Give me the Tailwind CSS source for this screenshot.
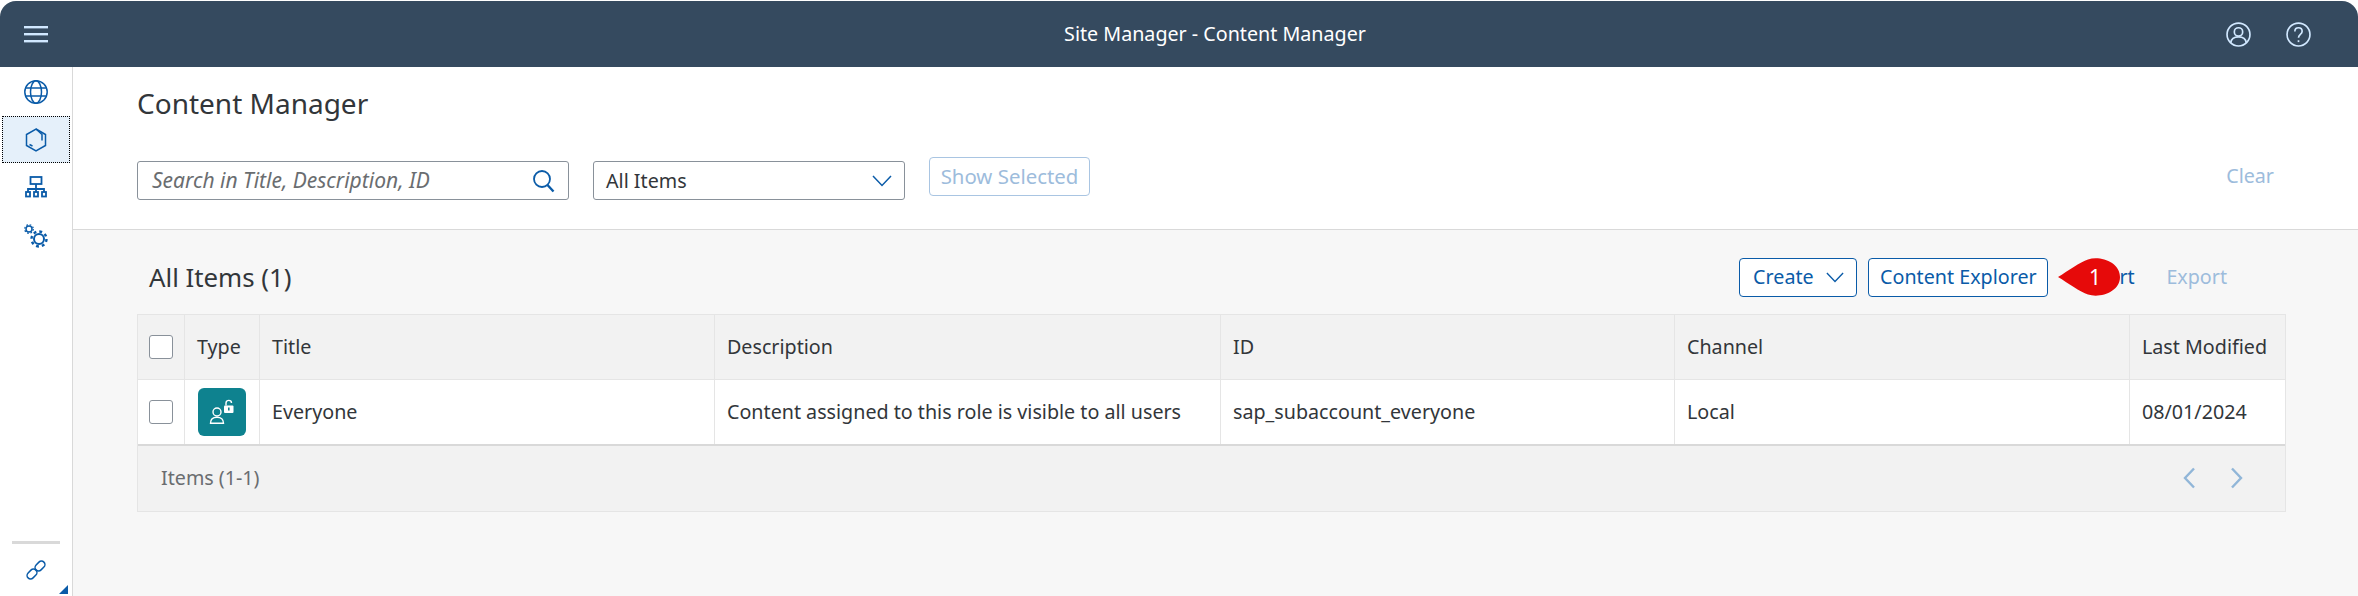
<!DOCTYPE html>
<html lang="en">
	<head>
		<meta charset="UTF-8" />
		<meta name="viewport" content="width=device-width, initial-scale=1.0" />
		<title>Content Manager</title>
		<script src="https://cdn.jsdelivr.net/npm/@tailwindcss/browser@4"></script>
	</head>
	<body class="bg-white">
		<div class="w-[2358px] h-[596px] pt-px overflow-hidden flex flex-col font-['Noto_Sans',sans-serif] text-[19.7px] text-[#32363a]">
			<!-- shell bar -->
			<header class="h-[66px] shrink-0 bg-[#354a5f] rounded-t-[16px] relative flex items-center justify-between pl-[24px] pr-[47px] text-white">
				<svg class="w-[24px] h-[17px]" viewBox="0 0 24 17" fill="#d1e8ff"><rect y="0" width="24" height="2.400" /><rect y="7" width="24" height="2.400" /><rect y="14" width="24" height="2.400" /></svg>
				<span class="absolute left-[708px] w-[1014px] text-center">Site Manager - Content Manager</span>
				<div class="flex gap-[35px] items-center">
					<svg class="w-[25px] h-[25px]" viewBox="0 0 24 24" fill="none" stroke="#d1e8ff" stroke-width="1.600"><circle cx="12" cy="12" r="11" /><circle cx="12" cy="9.500" r="4" /><path d="M4.500 20c.5-4 3.500-5.800 7.500-5.800s7 1.800 7.500 5.800" /></svg>
					<svg class="w-[25px] h-[25px]" viewBox="0 0 24 24" fill="none" stroke="#d1e8ff" stroke-width="1.600"><circle cx="12" cy="12" r="11" /><path d="M8.500 9c0-2.200 1.500-3.500 3.500-3.500s3.500 1.300 3.500 3.300c0 3-3.500 3-3.500 6.200" /><path d="M12 17.500v1.800" /></svg>
				</div>
			</header>

			<div class="flex flex-1 min-h-0">
				<!-- side nav -->
				<aside class="w-[73px] shrink-0 bg-white border-r border-[#d9d9d9] rounded-bl-[14px] relative flex flex-col">
					<div class="h-[49px] flex items-center justify-center">
						<svg class="w-[24px] h-[24px]" viewBox="0 0 24 24" fill="none" stroke="#0a5ba8" stroke-width="1.500"><circle cx="12" cy="12" r="11.200" /><ellipse cx="12" cy="12" rx="5.500" ry="11.200" /><path d="M1.500 8h21M1.500 16h21" /></svg>
					</div>
					<div class="h-[47px] bg-[#e5f0fa] border border-dotted border-black mx-[2px] flex items-center justify-center">
						<svg class="w-[22px] h-[24px]" viewBox="0 0 22 24" fill="none" stroke="#0a5ba8" stroke-width="1.500"><path d="M11 1l9.500 5.500v11L11 23l-9.500-5.500v-11z" /><path d="M11 1l6 5.500v6" /><path d="M4.500 16.500l3 1.500" /></svg>
					</div>
					<div class="h-[48px] flex items-center justify-center">
						<svg class="w-[22px] h-[22px]" viewBox="0 0 22 22" fill="none" stroke="#0a5ba8" stroke-width="1.800"><rect x="5.500" y="1" width="11" height="7" /><path d="M11 8v5M3 16v-3h16v3M11 13v3" /><rect x="1" y="16" width="4" height="4.500" /><rect x="9" y="16" width="4" height="4.500" /><rect x="17" y="16" width="4" height="4.500" /></svg>
					</div>
					<div class="h-[50px] flex items-center justify-center">
						<svg class="w-[24px] h-[24px]" viewBox="0 0 24 24" fill="none" stroke="#0a5ba8"><circle cx="5" cy="5" r="3" stroke-width="1.500" /><circle cx="5" cy="5" r="4.300" stroke-width="1.200" stroke-dasharray="1.700 1.700" /><circle cx="15" cy="15" r="5" stroke-width="2" /><circle cx="15" cy="15" r="7.500" stroke-width="2.400" stroke-dasharray="2.900 3" /></svg>
					</div>
					<div class="mt-auto mx-[12px] h-[3px] bg-[#d9d9d9]"></div>
					<div class="h-[52px] flex items-center justify-center">
						<svg class="w-[22px] h-[22px]" viewBox="0 0 22 22" fill="none" stroke="#0a5ba8" stroke-width="1.500">
							<rect x="-5.500" y="-3.500" width="11" height="7" rx="3.500" transform="translate(7 15) rotate(-45)" />
							<rect x="-5.500" y="-3.500" width="11" height="7" rx="3.500" transform="translate(15 7) rotate(-45)" />
						</svg>
					</div>
					<span class="absolute right-[4px] bottom-[2px] w-0 h-0 border-l-[9px] border-l-transparent border-b-[9px] border-b-[#0a5ba8]"></span>
				</aside>

				<main class="flex-1 min-w-0 bg-[#f7f7f7] flex flex-col">
					<!-- filter bar -->
					<section class="h-[163px] shrink-0 bg-white border-b border-[#d9d9d9] pl-[64px] pr-[84px] pt-[16px]">
						<h1 class="text-[28px] leading-[40px]">Content Manager</h1>
						<div class="mt-[34px] flex items-start">
							<div class="w-[432px] h-[39px] mt-[4px] border border-[#89919a] rounded-[3px] pl-[14px] pr-[12px] flex items-center justify-between bg-white">
								<span class="italic text-[21px] text-[#6a6d70]">Search in Title, Description, ID</span>
								<svg class="w-[24px] h-[24px]" viewBox="0 0 24 24" fill="none" stroke="#0a5ba8" stroke-width="1.800"><circle cx="10" cy="10" r="8" /><path d="M15.500 16l6 6.500" stroke-width="2.400" /></svg>
							</div>
							<div class="w-[312px] h-[39px] mt-[4px] ml-[24px] border border-[#89919a] rounded-[3px] pl-[12px] pr-[12px] flex items-center justify-between bg-white">
								<span>All Items</span>
								<svg class="w-[20px] h-[12px]" viewBox="0 0 20 12" fill="none" stroke="#0a5ba8" stroke-width="1.500"><path d="M1 1l9 9.500L19 1" /></svg>
							</div>
							<button class="w-[161px] h-[39px] ml-[24px] border border-[#a9c5e2] rounded-[4px] text-[20.400px] text-[#9dbcdc] text-center">Show Selected</button>
							<span class="ml-auto mt-[4px] leading-[30px] text-[#9dbcdc]">Clear</span>
						</div>
					</section>

					<div class="pl-[64px] pr-[72px]">
						<!-- toolbar -->
						<div class="h-[84px] pl-[12px] pt-[10px] flex items-center relative">
							<h2 class="text-[25.800px]">All Items (1)</h2>
							<button class="ml-auto w-[118px] h-[39px] border border-[#0a5ba8] rounded-[4px] bg-white text-[#0a5ba8] flex items-center justify-center gap-[12px]">Create
								<svg class="w-[18px] h-[11px]" viewBox="0 0 20 12" fill="none" stroke="#0a5ba8" stroke-width="1.500"><path d="M1 1l9 9.500L19 1" /></svg>
							</button>
							<button class="ml-[11px] w-[180px] h-[39px] border border-[#0a5ba8] rounded-[4px] bg-white text-[#0a5ba8]">Content Explorer</button>
							<span class="ml-[22px] w-[60px] text-[#0a5ba8]">Import</span>
							<span class="ml-[36px] mr-[59px] text-[#9dbcdc]">Export</span>
							<!-- callout marker -->
							<div class="absolute left-[1921px] top-[27px] w-[62px] h-[40px]">
								<svg class="w-[62px] h-[40px]" viewBox="0 0 62 40"><path d="M0 20C10 14 22 5 30 2.500 42-1.500 62 5 62 20S42 41.500 30 37.500C22 35 10 26 0 20z" fill="#e60a0a" /></svg>
								<span class="absolute left-[31px] top-[5px] text-[21px] leading-[30px] text-white">1</span>
							</div>
						</div>

						<!-- table -->
						<div class="border-t border-x border-[#e5e5e5]">
							<div class="grid grid-cols-[47px_75px_455px_506px_454px_455px_1fr] h-[65px] bg-[#f2f2f2] border-b border-[#e5e5e5]">
								<div class="border-r border-[#e5e5e5] flex items-center justify-center"><span class="w-[24px] h-[24px] bg-white border border-[#89919a] rounded-[3px]"></span></div>
								<div class="border-r border-[#e5e5e5] pl-[12px] flex items-center">Type</div>
								<div class="border-r border-[#e5e5e5] pl-[12px] flex items-center">Title</div>
								<div class="border-r border-[#e5e5e5] pl-[12px] flex items-center">Description</div>
								<div class="border-r border-[#e5e5e5] pl-[12px] flex items-center">ID</div>
								<div class="border-r border-[#e5e5e5] pl-[12px] flex items-center">Channel</div>
								<div class="pl-[12px] flex items-center">Last Modified</div>
							</div>
							<div class="grid grid-cols-[47px_75px_455px_506px_454px_455px_1fr] h-[66px] bg-white border-b-[2px] border-[#d9d9d9]">
								<div class="border-r border-[#e5e5e5] flex items-center justify-center"><span class="w-[24px] h-[24px] bg-white border border-[#89919a] rounded-[3px]"></span></div>
								<div class="border-r border-[#e5e5e5] flex items-center justify-center">
									<div class="w-[48px] h-[48px] rounded-[6px] bg-[#0e828f] flex items-center justify-center">
										<svg class="w-[26px] h-[26px]" viewBox="0 0 26 26" fill="none" stroke="#fff" stroke-width="1.400"><circle cx="8" cy="13" r="4" /><path d="M1.500 24.200c0-4 2.500-6 6.500-6s6.500 2 6.500 6z" /><rect x="15" y="6.500" width="9.500" height="7.500" rx="1" fill="#fff" stroke="none" /><path d="M17 6.500V4c0-3.500 5.500-3.500 5.500 0" /><rect x="19" y="8.500" width="1.600" height="3" fill="#0e828f" stroke="none" /></svg>
									</div>
								</div>
								<div class="border-r border-[#e5e5e5] pl-[12px] flex items-center">Everyone</div>
								<div class="border-r border-[#e5e5e5] pl-[12px] flex items-center">Content assigned to this role is visible to all users</div>
								<div class="border-r border-[#e5e5e5] pl-[12px] flex items-center">sap_subaccount_everyone</div>
								<div class="border-r border-[#e5e5e5] pl-[12px] flex items-center">Local</div>
								<div class="pl-[12px] flex items-center">08/01/2024</div>
							</div>
							<!-- pagination -->
							<div class="h-[66px] bg-[#f2f2f2] border-b border-[#e5e5e5] pl-[23px] pr-[42px] pb-[2px] flex items-center justify-between">
								<span class="text-[#6a6d70]">Items (1-1)</span>
								<div class="flex gap-[36px]">
									<svg class="w-[12px] h-[22px]" viewBox="0 0 12 22" fill="none" stroke="#91b6d8" stroke-width="2.400"><path d="M11 1.500L2 11l9 9.500" /></svg>
									<svg class="w-[12px] h-[22px]" viewBox="0 0 12 22" fill="none" stroke="#91b6d8" stroke-width="2.400"><path d="M1 1.500L10 11l-9 9.500" /></svg>
								</div>
							</div>
						</div>
					</div>
				</main>
			</div>
		</div>
	</body>
</html>
